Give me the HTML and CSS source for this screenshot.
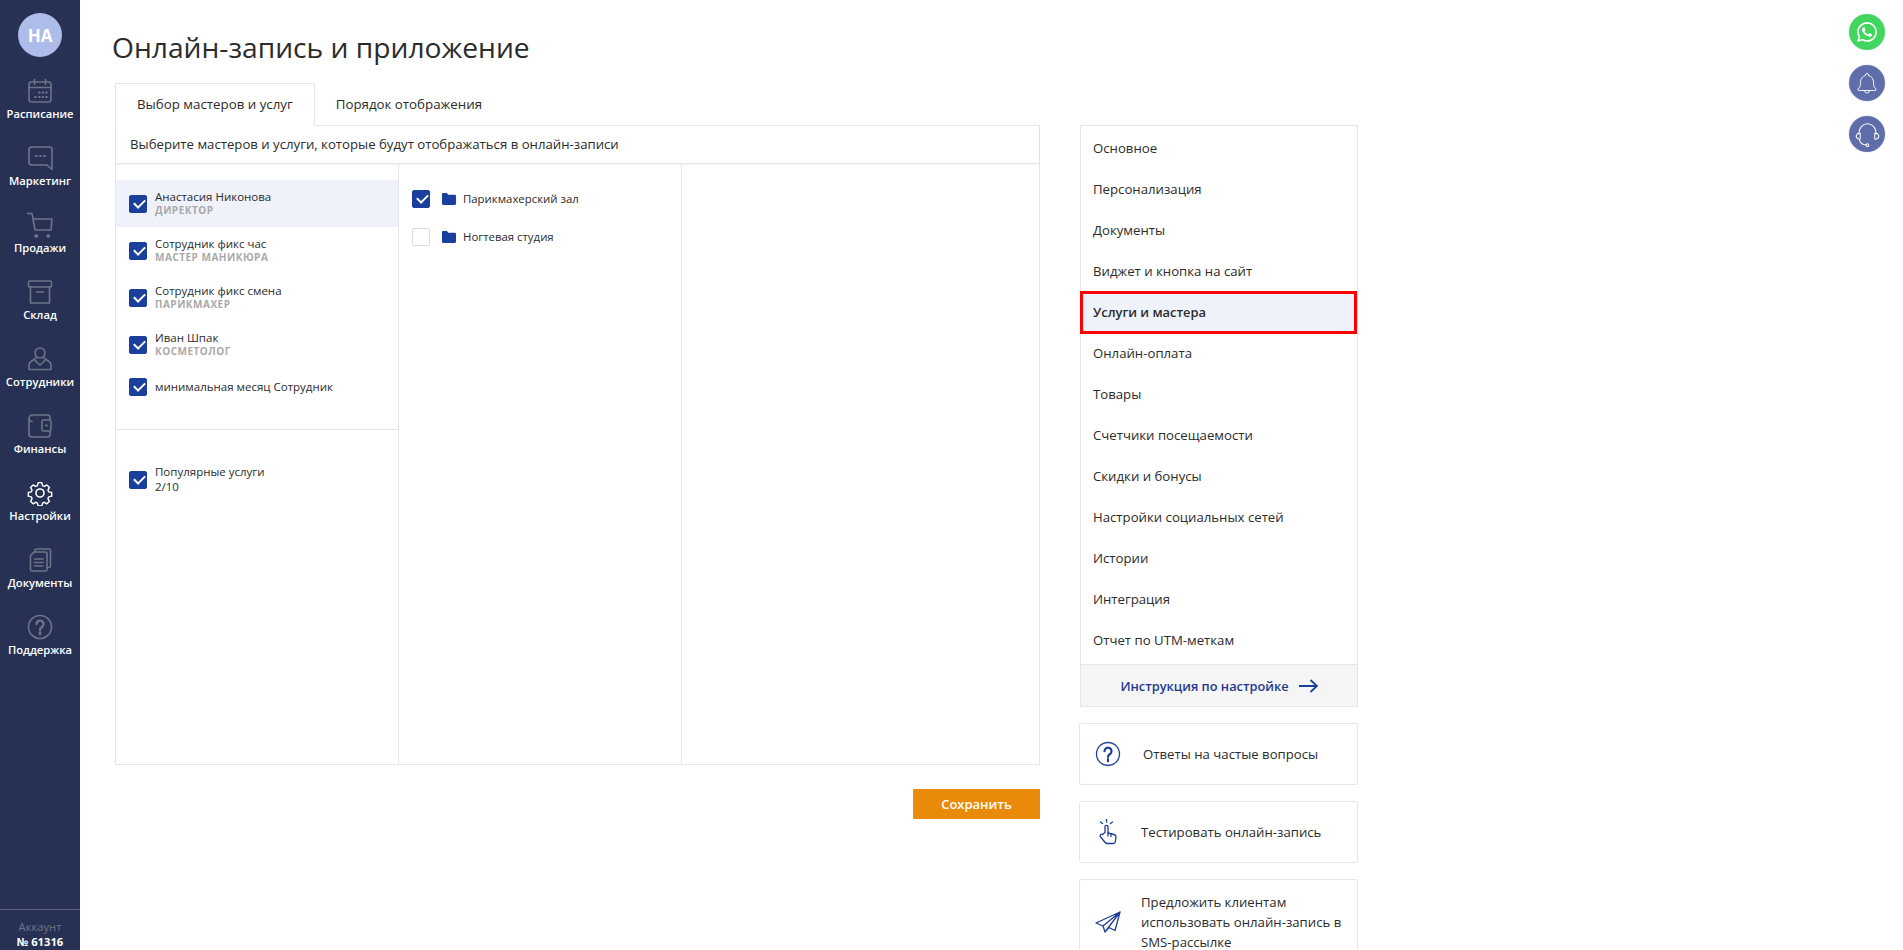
FILE: index.html
```html
<!DOCTYPE html>
<html lang="ru">
<head>
<meta charset="utf-8">
<title>Онлайн-запись и приложение</title>
<link rel="stylesheet" href="styles.css">
</head>
<body>
<div class="app">
  <aside class="sidebar">
    <div class="avatar">НА</div>
    <nav class="nav">
      <a class="nav-item"><svg class="nav-icon" viewBox="0 0 26 26"><rect x="2" y="4" width="22" height="20" rx="2.5"/><path d="M2 9.5h22M7.5 1.5v5M18.5 1.5v5"/><path class="dots" d="M12 14.5h.8M15.5 14.5h.8M19 14.5h.8M8 19h.8M12 19h.8M15.5 19h.8M19 19h.8"/></svg><span>Расписание</span></a>
      <a class="nav-item"><svg class="nav-icon" viewBox="0 0 26 26"><path d="M4.5 2h18A2.5 2.5 0 0 1 25 4.500v20l-5-4.500H4.500A2.500 2.500 0 0 1 2 17.500v-13A2.500 2.500 0 0 1 4.500 2z"/><path class="dots" d="M9 11h1M13 11h1M17 11h1"/></svg><span>Маркетинг</span></a>
      <a class="nav-item"><svg class="nav-icon" viewBox="0 0 26 26"><path d="M.5 1.500h4.500l3 16.500h16M6 7h19l-1 11"/><path class="dots wide" d="M9 24h.5M21 24h.5"/></svg><span>Продажи</span></a>
      <a class="nav-item"><svg class="nav-icon" viewBox="0 0 26 26"><rect x="1.500" y="2" width="23" height="6" rx="1.500"/><path d="M3.500 8v16h19V8M9.500 13h7"/></svg><span>Склад</span></a>
      <a class="nav-item"><svg class="nav-icon" viewBox="0 0 26 26"><circle cx="13" cy="7" r="5"/><path d="M9.500 11c0 2.500-7.500 3.500-7.500 8v4.500h22V19c0-4.500-7.500-5.500-7.500-8M8 14.500l5 4.500 5-4.500"/></svg><span>Сотрудники</span></a>
      <a class="nav-item"><svg class="nav-icon" viewBox="0 0 26 26"><path d="M23 7V4.500A2.500 2.500 0 0 0 20.500 2H5.500A3.500 3.500 0 0 0 2 5.500V21a3 3 0 0 0 3 3h15.500a2.500 2.500 0 0 0 2.500-2.500V18"/><path d="M2 6c0 1.500 1.500 2.500 3 2.500"/><rect x="15" y="7" width="9" height="11" rx="1.500"/><path class="dots" d="M19 12.500h1"/></svg><span>Финансы</span></a>
      <a class="nav-item is-active"><svg class="nav-icon" viewBox="0 0 26 26"><path d="M11 1.500h4l.8 3.300 2 .9 2.900-1.700 2.800 2.800-1.700 2.900.9 2 3.300.8v4l-3.300.8-.9 2 1.700 2.900-2.800 2.800-2.900-1.700-2 .9-.8 3.300h-4l-.8-3.300-2-.9-2.900 1.700-2.800-2.800 1.700-2.900-.9-2-3.300-.8v-4l3.300-.8.9-2-1.700-2.900 2.800-2.800 2.900 1.700 2-.9z" transform="translate(1.300 1.300) scale(.9)"/><circle cx="13" cy="13" r="4"/></svg><span>Настройки</span></a>
      <a class="nav-item"><svg class="nav-icon" viewBox="0 0 26 26"><path d="M8 5V3.500A1.500 1.500 0 0 1 9.500 2H22a1.500 1.500 0 0 1 1.500 1.500V19a1.500 1.500 0 0 1-1.500 1.500h-2"/><path d="M7 5h11.500A1.500 1.500 0 0 1 20 6.500v16a1.500 1.500 0 0 1-1.500 1.500H5a1.500 1.500 0 0 1-1.500-1.500V8.500z"/><path d="M7.500 12h8.500M7.500 15.500h8.500M7.500 19h8.500"/></svg><span>Документы</span></a>
      <a class="nav-item"><svg class="nav-icon" viewBox="0 0 26 26"><circle cx="13" cy="13" r="11.500"/><path class="strong" d="M9.500 10a3.500 3.500 0 1 1 5.500 3c-1.300.9-2 1.500-2 3M13 18.500v1.500"/></svg><span>Поддержка</span></a>
    </nav>
    <div class="account"><span class="account-label">Аккаунт</span><strong>№ 61316</strong></div>
  </aside>

  <main class="main">
    <h1 class="title">Онлайн-запись и приложение</h1>
    <div class="workspace">
      <section class="editor">
        <div class="tabs">
          <div class="tab tab-active">Выбор мастеров и услуг</div>
          <div class="tab">Порядок отображения</div>
        </div>
        <div class="panel">
          <div class="panel-head">Выберите мастеров и услуги, которые будут отображаться в онлайн-записи</div>
          <div class="columns">
            <div class="col col-staff">
              <div class="staff-list">
                <div class="person is-selected"><span class="check on"></span><div class="person-text"><div class="name">Анастасия Никонова</div><div class="role">ДИРЕКТОР</div></div></div>
                <div class="person"><span class="check on"></span><div class="person-text"><div class="name">Сотрудник фикс час</div><div class="role">МАСТЕР МАНИКЮРА</div></div></div>
                <div class="person"><span class="check on"></span><div class="person-text"><div class="name">Сотрудник фикс смена</div><div class="role">ПАРИКМАХЕР</div></div></div>
                <div class="person"><span class="check on"></span><div class="person-text"><div class="name">Иван Шпак</div><div class="role">КОСМЕТОЛОГ</div></div></div>
                <div class="person person-short"><span class="check on"></span><div class="person-text person-text-single"><div class="name">минимальная месяц Сотрудник</div></div></div>
              </div>
              <div class="popular">
                <div class="person"><span class="check on"></span><div class="person-text"><div class="name">Популярные услуги</div><div class="name count">2/10</div></div></div>
              </div>
            </div>
            <div class="col col-groups">
              <div class="group"><span class="check on"></span><svg class="folder" viewBox="0 0 14 12"><path d="M0 1.200C0 .5.5 0 1.200 0h3.600l1.400 1.800h6.600c.7 0 1.200.5 1.200 1.200v7.800c0 .7-.5 1.200-1.200 1.200H1.200C.5 12 0 11.500 0 10.800z"/></svg><span class="group-name">Парикмахерский зал</span></div>
              <div class="group"><span class="check"></span><svg class="folder" viewBox="0 0 14 12"><path d="M0 1.200C0 .5.5 0 1.200 0h3.600l1.400 1.800h6.600c.7 0 1.200.5 1.200 1.200v7.800c0 .7-.5 1.200-1.200 1.200H1.200C.5 12 0 11.500 0 10.800z"/></svg><span class="group-name">Ногтевая студия</span></div>
            </div>
            <div class="col col-rest"></div>
          </div>
        </div>
        <div class="actions"><button class="save" type="button">Сохранить</button></div>
      </section>

      <aside class="side">
        <div class="menu">
          <div class="menu-list">
            <a class="menu-item">Основное</a>
            <a class="menu-item">Персонализация</a>
            <a class="menu-item">Документы</a>
            <a class="menu-item">Виджет и кнопка на сайт</a>
            <a class="menu-item is-current">Услуги и мастера</a>
            <a class="menu-item">Онлайн-оплата</a>
            <a class="menu-item">Товары</a>
            <a class="menu-item">Счетчики посещаемости</a>
            <a class="menu-item">Скидки и бонусы</a>
            <a class="menu-item">Настройки социальных сетей</a>
            <a class="menu-item">Истории</a>
            <a class="menu-item">Интеграция</a>
            <a class="menu-item">Отчет по UTM-меткам</a>
          </div>
          <a class="guide"><span>Инструкция по настройке</span><svg class="guide-arrow" viewBox="0 0 19 14"><path d="M0 7h18M11.500 1l6.500 6-6.500 6"/></svg></a>
        </div>
        <a class="card">
          <svg class="card-icon" viewBox="0 0 26 26"><circle cx="13" cy="13" r="11.500"/><path class="q" d="M9.500 10.200a3.500 3.500 0 1 1 5.600 2.800c-1.300.9-2.100 1.500-2.100 3M13 18.200v2"/></svg>
          <span class="card-text card-text-wide">Ответы на частые вопросы</span>
        </a>
        <a class="card">
          <svg class="card-icon" viewBox="0 0 26 26"><path d="M10 13.500V7.800a1.500 1.500 0 0 1 3 0V14l6 1.500c1.200.3 2 1.300 2 2.500l-.6 4.500c-.2 1.200-1.100 2-2.300 2h-6c-.8 0-1.500-.4-2-1l-4.800-6c-.9-1.300.8-3 2.200-2z"/><path d="M11.500 0v3M5.500 3l2 1.500M17.500 3l-2 1.500M13 14v3M16 15v2.500"/></svg>
          <span class="card-text">Тестировать онлайн-запись</span>
        </a>
        <a class="card card-tall">
          <svg class="card-icon" viewBox="0 0 26 26"><path d="M25 3L1 14l7 3zM25 3L8 17l2 6 4-4.500 6 3zM25 3L10 23"/></svg>
          <span class="card-text">Предложить клиентам использовать онлайн-запись в SMS-рассылке</span>
        </a>
      </aside>
    </div>
  </main>
</div>

<div class="floating">
  <a class="fab fab-green"><svg viewBox="0 0 24 24"><path d="M17.472 14.382c-.297-.149-1.758-.867-2.030-.967-.273-.099-.471-.148-.670.150-.197.297-.767.966-.940 1.164-.173.199-.347.223-.644.075-.297-.150-1.255-.463-2.390-1.475-.883-.788-1.480-1.761-1.653-2.059-.173-.297-.018-.458.130-.606.134-.133.298-.347.446-.520.149-.174.198-.298.298-.497.099-.198.050-.371-.025-.520-.075-.149-.669-1.612-.916-2.207-.242-.579-.487-.500-.669-.510-.173-.008-.371-.010-.570-.010-.198 0-.520.074-.792.372-.272.297-1.040 1.016-1.040 2.479 0 1.462 1.065 2.875 1.213 3.074.149.198 2.096 3.200 5.077 4.487.709.306 1.262.489 1.694.625.712.227 1.360.195 1.871.118.571-.085 1.758-.719 2.006-1.413.248-.694.248-1.289.173-1.413-.074-.124-.272-.198-.570-.347m-5.421 7.403h-.004a9.870 9.870 0 0 1-5.031-1.378l-.361-.214-3.741.982.998-3.648-.235-.374a9.860 9.860 0 0 1-1.510-5.260c.001-5.450 4.436-9.884 9.888-9.884 2.640 0 5.122 1.030 6.988 2.898a9.825 9.825 0 0 1 2.893 6.994c-.003 5.450-4.437 9.884-9.885 9.884m8.413-18.297A11.815 11.815 0 0 0 12.050 0C5.495 0 .160 5.335.157 11.892c0 2.096.547 4.142 1.588 5.945L.057 24l6.305-1.654a11.882 11.882 0 0 0 5.683 1.448h.005c6.554 0 11.890-5.335 11.893-11.893a11.821 11.821 0 0 0-3.480-8.413z"/></svg></a>
  <a class="fab"><svg class="line line-bell" viewBox="0 0 24 24"><path d="M12 2.500a1.500 1.500 0 0 1 1.500 1.500v.6c3.200.7 5 3.300 5 6.400 0 4 .7 5.500 2.500 7a1 1 0 0 1-.7 1.500H3.700a1 1 0 0 1-.7-1.500c1.800-1.500 2.500-3 2.500-7 0-3.100 1.800-5.700 5-6.400V4A1.500 1.500 0 0 1 12 2.500zM9.500 19.500a2.500 2.500 0 0 0 5 0"/></svg></a>
  <a class="fab"><svg class="line" viewBox="0 0 24 24"><path d="M4.500 11V10a7.500 7.500 0 0 1 15 0v1M4.500 11a2.500 2.500 0 0 0-1 4.800 2.500 2.500 0 0 0 2 .2v-5zM19.500 11a2.500 2.500 0 0 1 1 4.800 2.500 2.500 0 0 1-2 .2v-5zM4.800 16.500c.4 2.500 2.700 4.500 6 4.800"/><circle cx="12" cy="21.500" r="1.200"/></svg></a>
</div>
</body>
</html>
```
FILE: styles.css
```css
* { box-sizing: border-box; }
html, body { margin: 0; height: 100%; }
body { overflow: hidden; background: #fff; color: #2b2b2b; font-family: "Open Sans", "Liberation Sans", sans-serif; }
a { color: inherit; text-decoration: none; }

.app { display: flex; height: 950px; overflow: hidden; }

/* Sidebar */
.sidebar { flex: 0 0 80px; display: flex; flex-direction: column; align-items: center; background: #273153; color: #fff; }
.avatar { width: 44px; height: 44px; margin-top: 13px; border-radius: 50%; background: #aebce9; color: #fff; font-size: 17px; font-weight: 700; display: flex; align-items: center; justify-content: center; }
.nav { margin-top: 21px; display: flex; flex-direction: column; width: 100%; }
.nav-item { height: 67px; display: flex; flex-direction: column; align-items: center; font-size: 11.2px; font-weight: 600; line-height: 16px; }
.nav-icon { width: 26px; height: 26px; margin-bottom: 2px; fill: none; stroke: #6d7489; stroke-width: 1.6; stroke-linecap: round; stroke-linejoin: round; }
.nav-icon .dots { stroke-width: 1.8; }
.nav-icon .dots.wide { stroke-width: 3.500; }
.nav-icon .strong { stroke-width: 2.400; }
.is-active .nav-icon { stroke: #fff; }
.account { margin-top: auto; width: 100%; height: 41px; padding-top: 9px; border-top: 1px solid #5d6580; display: flex; flex-direction: column; align-items: center; font-size: 11.2px; line-height: 15px; }
.account-label { color: #6d7489; }
.account strong { font-weight: 700; }

/* Main */
.main { flex: 1; padding: 26px 0 0 32px; min-width: 0; }
.title { margin: 0; height: 42px; font-size: 28.2px; font-weight: 500; line-height: 42px; color: #2b2b2b; }
.workspace { margin: 15px 0 0 3px; display: flex; align-items: flex-start; gap: 40px; }

/* Tabs + panel */
.editor { flex: 0 0 925px; }
.tabs { display: flex; height: 42px; }
.tab { padding: 0 21px; font-size: 13.3px; line-height: 42px; white-space: nowrap; }
.tab-active { position: relative; z-index: 1; height: 43px; background: #fff; border: 1px solid #e6e6e6; border-bottom: 0; line-height: 40px; }
.panel { height: 640px; border: 1px solid #e6e6e6; display: flex; flex-direction: column; }
.panel-head { flex: 0 0 38px; padding: 0 14px; font-size: 13.2px; line-height: 36px; border-bottom: 1px solid #e6e6e6; box-shadow: 0 1px 2px rgba(0,0,0,.06); }
.columns { flex: 1; display: flex; min-height: 0; }
.col { border-right: 1px solid #e6e6e6; }
.col-staff { flex: 0 0 283px; display: flex; flex-direction: column; }
.col-groups { flex: 0 0 283px; padding-top: 16px; }
.col-rest { flex: 1; border-right: 0; }
.staff-list { flex: 0 0 266px; padding-top: 16px; border-bottom: 1px solid #e6e6e6; }
.popular { padding-top: 26px; }
.person { height: 47px; padding-left: 13px; display: flex; align-items: center; gap: 8px; }
.person.is-selected { background: #eff2fa; }
.person-short { height: 37px; }
.person-text { min-width: 0; padding-bottom: 1px; }
.person-text-single { padding-bottom: 0; }
.name { font-size: 11.5px; line-height: 15px; color: #2b2b2b; }
.count { line-height: 15px; }
.role { font-size: 10px; font-weight: 700; line-height: 13px; letter-spacing: .5px; color: #a9a9a9; }
.check { flex: 0 0 18px; width: 18px; height: 18px; border-radius: 2px; border: 1px solid #dcdcdc; background: #fff; position: relative; }
.check.on { background: #1a3f9d; border-color: #1a3f9d; }
.check.on::after { content: ""; position: absolute; left: 3.500px; top: 3px; width: 9px; height: 5px; border-left: 2px solid #fff; border-bottom: 2px solid #fff; transform: rotate(-45deg); }
.group { height: 38px; padding-left: 13px; display: flex; align-items: center; }
.folder { flex: 0 0 14px; width: 14px; height: 12px; margin-left: 12px; fill: #1a3f9d; }
.group-name { margin-left: 7px; padding-bottom: 2px; font-size: 11.4px; color: #2b2b2b; }
.actions { margin-top: 24px; display: flex; justify-content: flex-end; }
.save { width: 127px; height: 30px; border: 0; border-radius: 1px; background: #ea8a0b; color: #fff; font: 600 13px "Open Sans", "Liberation Sans", sans-serif; }

/* Right column */
.side { flex: 0 0 277px; margin-top: 42px; }
.menu { border: 1px solid #e6e6e6; }
.menu-list { padding: 2px 0 3px; }
.menu-item { display: block; height: 41px; padding-left: 12px; font-size: 13.2px; line-height: 40px; color: #2b2b2b; }
.menu-item.is-current { margin-right: 1px; background: #eff2fa; font-size: 12.9px; font-weight: 600; outline: 3px solid #f00; outline-offset: -2px; position: relative; }
.guide { height: 42px; display: flex; align-items: center; justify-content: center; gap: 10px; border-top: 1px solid #e6e6e6; background: #f5f5f5; color: #1f3a8f; font-size: 12.8px; font-weight: 600; }
.guide-arrow { width: 19px; height: 14px; fill: none; stroke: #1a3f9d; stroke-width: 1.800; }
.card { width: 279px; margin: 16px 0 0 -1px; height: 62px; padding: 0 0 1px 15px; display: flex; align-items: center; border: 1px solid #e6e6e6; border-radius: 2px; }
.card-tall { height: 87px; }
.card-icon { flex: 0 0 26px; width: 26px; height: 26px; fill: none; stroke: #1f3f96; stroke-width: 1.300; stroke-linejoin: round; stroke-linecap: round; }
.card-icon .q { stroke-width: 2.200; }
.card-text { margin-left: 20px; font-size: 13.2px; line-height: 20px; color: #2b2b2b; }
.card-text-wide { margin-left: 22px; }

/* Floating round buttons */
.floating { position: fixed; top: 14px; right: 18px; display: flex; flex-direction: column; gap: 15px; }
.fab { width: 36px; height: 36px; border-radius: 50%; background: #5f6dab; display: flex; align-items: center; justify-content: center; box-shadow: 0 0 3px rgba(0,0,0,.12); }
.fab-green { background: #41d65f; }
.fab svg { width: 20px; height: 20px; fill: #fff; }
.fab svg.line { width: 27px; height: 27px; fill: none; stroke: #fff; stroke-width: .9; }
.fab svg.line-bell { width: 24px; height: 24px; }
```
